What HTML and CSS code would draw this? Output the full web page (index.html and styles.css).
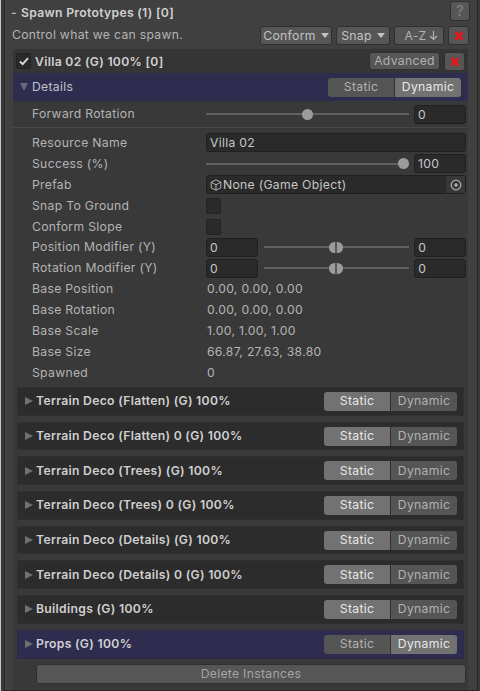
FILE: index.html
```html
<!DOCTYPE html>
<html lang="en">
<head>
<meta charset="utf-8">
<title>Spawn Prototypes</title>
<link rel="stylesheet" href="styles.css">
</head>
<body>
<main class="panel">
  <header class="title"><span class="dash">-</span><b>Spawn Prototypes (1) [0]</b><button class="btn help">?</button></header>
  <div class="sub">
    <span class="desc">Control what we can spawn.</span>
    <button class="btn conform">Conform<i class="caret"></i></button>
    <button class="btn snap">Snap<i class="caret"></i></button>
    <button class="btn sort">A-Z<svg width="9" height="11" viewBox="0 0 9 11"><path d="M4.5 1v8.5M1 6l3.500 3.500L8 6"/></svg></button>
    <button class="btn close"><svg width="10" height="10" viewBox="0 0 10 10"><path d="M1.500 1.300Q4 3.500 8.500 8.800M8.500 1Q5 4 1.500 8.800"/></svg></button>
  </div>
  <section class="proto">
    <div class="villa">
      <span class="check on"><svg width="10" height="9" viewBox="0 0 10 9"><path d="M1 4.500l2.700 2.700L9 1.200"/></svg></span>
      <b>Villa 02 (G) 100% [0]</b>
      <button class="btn adv">Advanced</button>
      <button class="btn close"><svg width="10" height="10" viewBox="0 0 10 10"><path d="M1.500 1.300Q4 3.500 8.500 8.800M8.500 1Q5 4 1.500 8.800"/></svg></button>
    </div>
    <div class="details"><i class="tri down"></i><span>Details</span><div class="toggle"><button>Static</button><button class="sel">Dynamic</button></div></div>
    <div class="row forward"><label>Forward Rotation</label><div class="slider"><i class="knob mid"></i></div><div class="field num">0</div></div>
    <div class="props">
      <div class="row"><label>Resource Name</label><div class="field wide">Villa 02</div></div>
      <div class="row"><label>Success (%)</label><div class="slider"><i class="knob end"></i></div><div class="field num">100</div></div>
      <div class="row"><label>Prefab</label><div class="field wide object"><svg class="cube" width="12" height="12" viewBox="0 0 12 12"><path d="M6 .8l4.800 2.400v5.600L6 11.200 1.200 8.800V3.200zM1.200 3.200L6 5.800l4.800-2.600M6 5.800v5.400"/></svg><span>None (Game Object)</span><em><svg width="12" height="12" viewBox="0 0 12 12"><circle cx="6" cy="6" r="4.800"/><circle class="dot" cx="6" cy="6" r="1.700"/></svg></em></div></div>
      <div class="row"><label>Snap To Ground</label><span class="check"></span></div>
      <div class="row"><label>Conform Slope</label><span class="check"></span></div>
      <div class="row"><label>Position Modifier (Y)</label><div class="field num">0</div><div class="slider short"><i class="knob pair"></i></div><div class="field num">0</div></div>
      <div class="row"><label>Rotation Modifier (Y)</label><div class="field num">0</div><div class="slider short"><i class="knob pair"></i></div><div class="field num">0</div></div>
      <div class="row"><label>Base Position</label><span class="val">0.00, 0.00, 0.00</span></div>
      <div class="row"><label>Base Rotation</label><span class="val">0.00, 0.00, 0.00</span></div>
      <div class="row"><label>Base Scale</label><span class="val">1.00, 1.00, 1.00</span></div>
      <div class="row"><label>Base Size</label><span class="val">66.87, 27.63, 38.80</span></div>
      <div class="row"><label>Spawned</label><span class="val">0</span></div>
    </div>
    <div class="groups">
      <div class="group"><i class="tri"></i><b>Terrain Deco (Flatten) (G) 100%</b><div class="toggle"><button class="sel">Static</button><button>Dynamic</button></div></div>
      <div class="group"><i class="tri"></i><b>Terrain Deco (Flatten) 0 (G) 100%</b><div class="toggle"><button class="sel">Static</button><button>Dynamic</button></div></div>
      <div class="group"><i class="tri"></i><b>Terrain Deco (Trees) (G) 100%</b><div class="toggle"><button class="sel">Static</button><button>Dynamic</button></div></div>
      <div class="group"><i class="tri"></i><b>Terrain Deco (Trees) 0 (G) 100%</b><div class="toggle"><button class="sel">Static</button><button>Dynamic</button></div></div>
      <div class="group"><i class="tri"></i><b>Terrain Deco (Details) (G) 100%</b><div class="toggle"><button class="sel">Static</button><button>Dynamic</button></div></div>
      <div class="group"><i class="tri"></i><b>Terrain Deco (Details) 0 (G) 100%</b><div class="toggle"><button class="sel">Static</button><button>Dynamic</button></div></div>
      <div class="group"><i class="tri"></i><b>Buildings (G) 100%</b><div class="toggle"><button class="sel">Static</button><button>Dynamic</button></div></div>
      <div class="group blue"><i class="tri"></i><b>Props (G) 100%</b><div class="toggle"><button>Static</button><button class="sel">Dynamic</button></div></div>
    </div>
    <button class="btn delete">Delete Instances</button>
  </section>
</main>
</body>
</html>
```
FILE: styles.css
```css
* { box-sizing: border-box; }
body {
  margin: 0; width: 480px; height: 691px; overflow: hidden;
  background: #383838; border-left: 1px solid #c4c7c8;
  font: 12.2px/16px Inter, "Liberation Sans", sans-serif;
  letter-spacing: .3px; color: #b4b4b4; white-space: nowrap;
}
b { font-weight: 600; color: #d0d0d0; }
button { font: inherit; letter-spacing: inherit; padding: 0; margin: 0; border: 0; color: #c3c3c3; }
svg { fill: none; stroke: #b0b0b0; stroke-width: 1.2; display: block; }
.panel {
  margin-left: 3px; width: 474px; height: 691px; background: #404040;
  border: solid #292929; border-width: 0 1px 1px; display: flex; flex-direction: column;
}
.title { height: 24px; display: flex; align-items: center; padding: 1px 7px 0 6px; }
.dash { width: 10px; font-weight: 600; }
.btn { background: #565656; border: 1px solid #303030; border-radius: 3px; display: flex; align-items: center; justify-content: center; height: 19px; }
.help { margin: -3px 0 0 auto; width: 20px; height: 20px; color: #7a7a7a; font-size: 15px; font-weight: 600; }
.sub { height: 25px; display: flex; padding: 2px 8px 0 7px; gap: 4px; }
.desc { flex: 1; padding-top: 1px; }
.conform { width: 72px; gap: 5px; }
.snap { width: 54px; gap: 5px; }
.sort { width: 50px; gap: 2px; padding-left: 4px; color: #b0b0b0; }
.caret { border: solid transparent; border-width: 5px 4px 0; border-top-color: #c3c3c3; }
.close { width: 21px; }
.close svg { stroke: #f01414; stroke-width: 2.500; }
.proto { margin-left: 8px; width: 455px; height: 641px; background: #393939; }
.villa { height: 24px; display: flex; align-items: flex-start; padding: 3px 3px 0; background: #353535; }
.villa b { margin: 2px auto 0 4px; }
.check { width: 15px; height: 16px; background: #2a2a2a; border: 1px solid #222; border-radius: 2px; display: flex; align-items: center; justify-content: center; }
.check.on { margin-top: 1px; }
.check.on svg { stroke: #ddd; stroke-width: 1.800; }
.adv { width: 71px; height: 18px; margin-right: 4px; color: #b0b0b0; }
.details { height: 28px; background: #2e2d50; display: flex; align-items: center; padding: 0 7px 0 7px; color: #c0c0c8; }
.details .toggle { width: 133px; }
.tri { width: 8px; margin-right: 4px; border: solid transparent; border-width: 4px 0 4px 8px; border-left-color: #707070; }
.tri.down { border: solid transparent; border-width: 8px 4px 0; border-top-color: #68687a; }
.toggle { display: flex; gap: 1px; width: 133px; height: 19px; margin-left: auto; background: #303030; border-radius: 3px; overflow: hidden; }
.toggle button { flex: 1; background: #555; color: #b2b2b2; }
.toggle .sel { background: #727272; color: #e8e8e8; }
.row { height: 20.9px; display: flex; align-items: center; padding: 0 2px 0 19px; }
.row label { width: 174px; flex: none; }
.val { padding-left: 1px; }
.forward { height: 27px; border-bottom: 1px solid #484848; }
.props { padding-top: 4.500px; height: 259px; }
.field { height: 19px; background: #2a2a2a; border: 1px solid #202020; border-radius: 3px; padding-left: 3px; line-height: 17px; color: #c6c6c6; }
.wide { width: 260px; }
.num { width: 52px; }
.slider { width: 203px; height: 2px; background: #606060; margin-right: 5px; display: flex; align-items: center; }
.slider.short { width: 146px; margin: 0 5px 0 6px; }
.knob { width: 11px; height: 11px; border-radius: 6px; background: #9c9c9c; }
.mid { margin-left: 96px; }
.end { margin-left: 192px; }
.pair { width: 14px; margin: 0 auto; background: linear-gradient(90deg, #9c9c9c 6px, #585858 6px 8px, #9c9c9c 8px); }
.object { display: flex; align-items: center; }
.object em { margin-left: auto; width: 19px; height: 17px; background: #373737; display: flex; align-items: center; justify-content: center; }
.dot { fill: #b0b0b0; stroke: none; }
.cube { margin-right: 1px; stroke-width: 1; }
.groups { padding: 0 4px; display: flex; flex-direction: column; gap: 6px; }
.group { height: 28.700px; background: #2c2c2c; border: 1px solid #303030; display: flex; align-items: center; padding: 0 6px 0 7px; }
.group .tri { margin-right: 3px; }
.group.blue { background: #2e2d50; border-color: #2b2a48; }
.delete { width: 430px; height: 20px; margin: 5px 0 0 23px; color: #a4a4a4; }
```
